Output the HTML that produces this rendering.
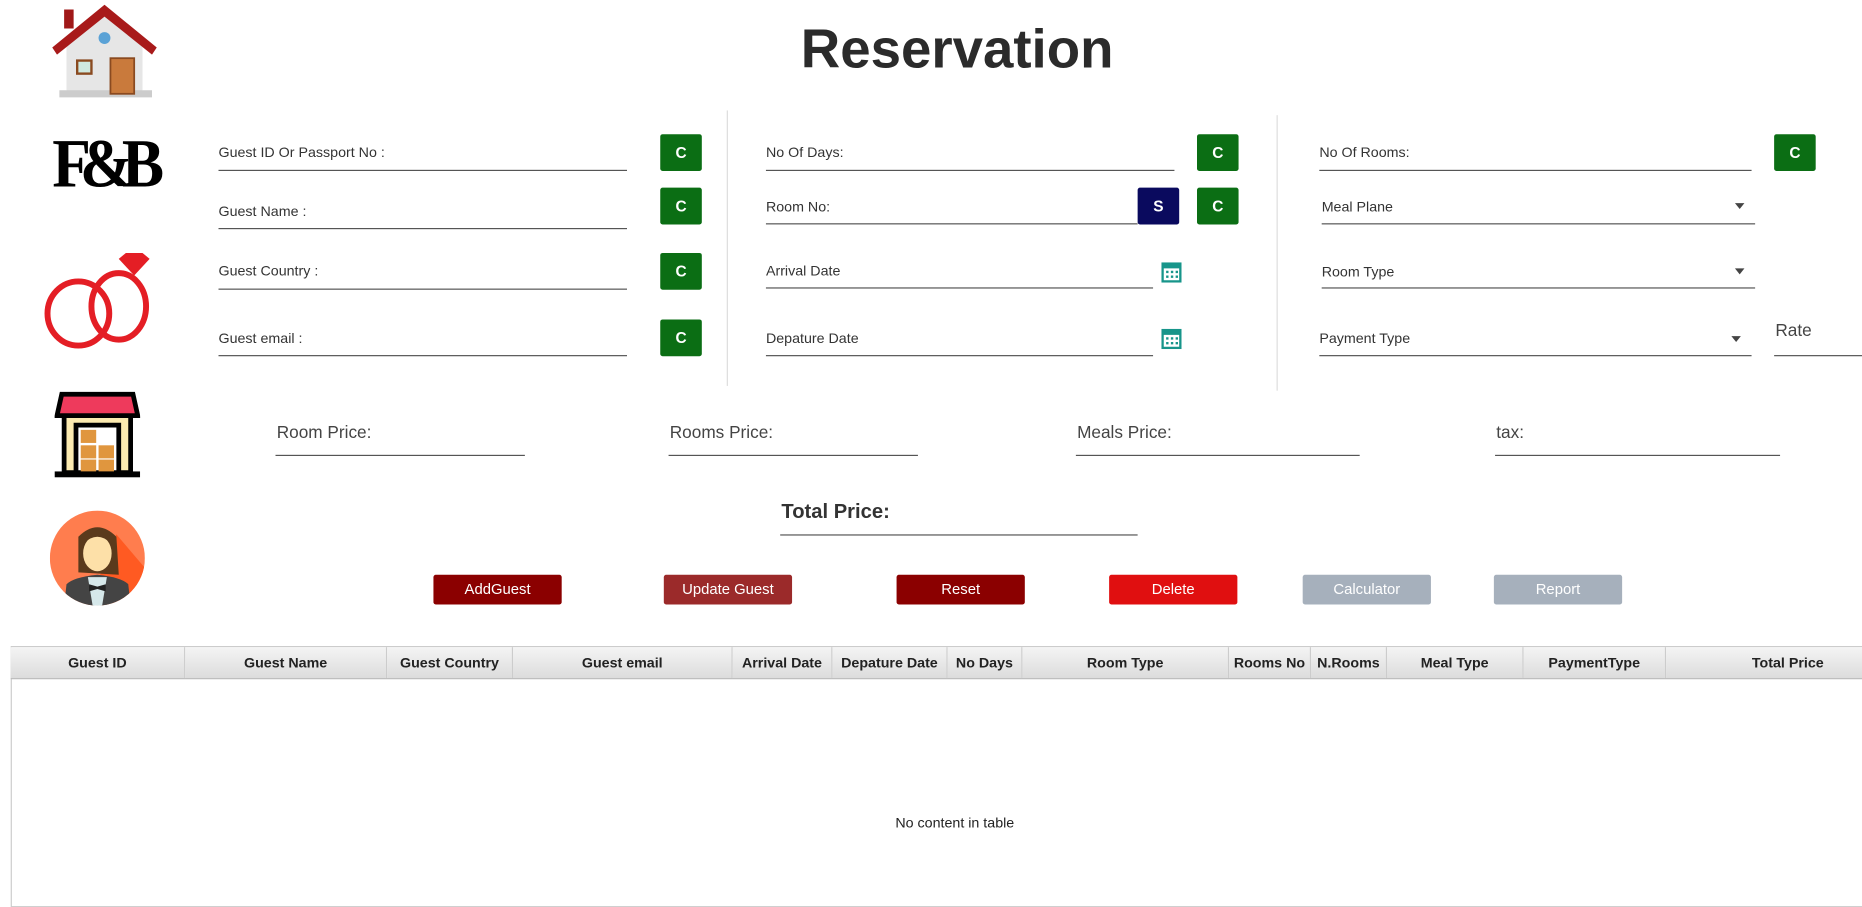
<!DOCTYPE html>
<html><head><meta charset="utf-8"><style>
html,body{margin:0;padding:0;width:1862px;height:869px;overflow:hidden;background:#fff}
#s{position:absolute;left:0;top:0;width:1568px;height:732px;transform:scale(1.1875);transform-origin:0 0;font-family:"Liberation Sans",sans-serif;color:#333}
.a{position:absolute}
.lb{position:absolute;font-size:12px;color:#333}
.ul{position:absolute;height:1px;background:#555}
.c{position:absolute;width:35px;height:31px;background:#0b6e14;color:#fff;font-weight:bold;font-size:13px;text-align:center;line-height:31px;border-radius:2px}
.btn{position:absolute;top:484px;width:108px;height:25px;color:#fff;font-size:12.5px;text-align:center;line-height:25px;border-radius:2px}
.pl{position:absolute;font-size:14.5px;color:#444}
.th{position:absolute;top:545px;height:26px;line-height:26px;font-size:12px;font-weight:bold;text-align:center;color:#222;border-right:1px solid #ccc;box-sizing:border-box;background:linear-gradient(#f4f4f4,#dcdcdc)}
.arr{position:absolute;width:0;height:0;border-left:4px solid transparent;border-right:4px solid transparent;border-top:5px solid #444}
</style></head><body><div id="s">
<div class="a" style="left:0;width:1612px;top:14px;text-align:center;font-size:46px;font-weight:bold;color:#2b2b2b">Reservation</div>

<svg class="a" style="left:42px;top:2px" width="92" height="82" viewBox="0 0 92 82">
<rect x="12" y="6" width="8" height="16" fill="#a01818"/>
<polygon points="14,34 46,10 78,34 78,76 14,76" fill="#e6e6e6"/>
<path d="M2,38 L46,2 L90,38 L86,44 L46,12 L6,44Z" fill="#a81a1a"/>
<rect x="8" y="74" width="78" height="6" fill="#ccc"/>
<circle cx="46" cy="30" r="5" fill="#5aa2d6"/>
<rect x="22" y="48" width="14" height="13" fill="#8a4a20"/><rect x="24" y="50" width="10" height="9" fill="#cfe9e0"/>
<rect x="51" y="47" width="20" height="30" fill="#c97a3c" stroke="#8a4a20" stroke-width="1.5"/>
</svg>
<div class="a" style="left:44px;top:108px;font-family:'Liberation Serif',serif;font-size:58px;line-height:60px;letter-spacing:-10px;color:#000;font-weight:bold;transform:scaleX(0.92);transform-origin:0 0">F&amp;B</div>
<svg class="a" style="left:36px;top:212px" width="96" height="84" viewBox="0 0 96 84">
<ellipse cx="30" cy="52" rx="26" ry="27" fill="none" stroke="#e41e25" stroke-width="5"/>
<ellipse cx="64" cy="46" rx="23" ry="28" fill="none" stroke="#e41e25" stroke-width="5"/>
<polygon points="64,6 70,1 84,1 90,6 77,20" fill="#e41e25"/>
</svg>
<svg class="a" style="left:46px;top:328px" width="72" height="74" viewBox="0 0 72 74">
<rect x="8" y="20" width="56" height="50" fill="#fbeab0" stroke="#000" stroke-width="4"/>
<polygon points="6,4 66,4 70,22 2,22" fill="#ee3a5c" stroke="#000" stroke-width="4"/>
<rect x="18" y="30" width="36" height="40" fill="#fff" stroke="#000" stroke-width="4"/>
<rect x="22" y="34" width="13" height="11" fill="#e0963e"/><rect x="22" y="47" width="13" height="11" fill="#e0963e"/><rect x="37" y="47" width="13" height="11" fill="#e0963e"/><rect x="22" y="59" width="13" height="10" fill="#e0963e"/><rect x="37" y="59" width="13" height="10" fill="#e0963e"/>
<rect x="0" y="69" width="72" height="5" fill="#000"/>
</svg>
<svg class="a" style="left:42px;top:430px" width="80" height="80" viewBox="0 0 80 80">
<defs><clipPath id="cc"><circle cx="40" cy="40" r="40"/></clipPath></defs>
<circle cx="40" cy="40" r="40" fill="#ff7d4e"/>
<g clip-path="url(#cc)">
<polygon points="56,20 90,60 60,90 40,60" fill="#ff5a22"/>
<path d="M24 22 Q40 6 56 22 L58 54 L24 52Z" fill="#5a3a1c"/>
<ellipse cx="40" cy="36" rx="12" ry="15" fill="#fde0a8"/>
<path d="M28 28 Q40 16 52 28 L52 22 Q40 12 28 22Z" fill="#5a3a1c"/>
<path d="M12 80 L14 62 Q20 56 40 54 Q60 56 66 62 L68 80Z" fill="#444"/>
<polygon points="32,56 48,56 44,80 36,80" fill="#d6e8ea"/>
<polygon points="33,62 40,64 47,62 47,68 40,66 33,68" fill="#222"/>
</g></svg>

<div class="lb" style="left:184px;top:121px">Guest ID Or Passport No :</div><div class="ul" style="left:184px;top:143px;width:344px"></div><div class="c" style="left:556px;top:113px">C</div>
<div class="lb" style="left:184px;top:171px">Guest Name :</div><div class="ul" style="left:184px;top:192px;width:344px"></div><div class="c" style="left:556px;top:158px">C</div>
<div class="lb" style="left:184px;top:221px">Guest Country :</div><div class="ul" style="left:184px;top:243px;width:344px"></div><div class="c" style="left:556px;top:213px">C</div>
<div class="lb" style="left:184px;top:278px">Guest email :</div><div class="ul" style="left:184px;top:299px;width:344px"></div><div class="c" style="left:556px;top:269px">C</div>

<div class="a" style="left:612px;top:93px;width:1px;height:232px;background:#ddd"></div>
<div class="lb" style="left:645px;top:121px">No Of Days:</div><div class="ul" style="left:645px;top:143px;width:344px"></div><div class="c" style="left:1008px;top:113px">C</div>
<div class="lb" style="left:645px;top:167px">Room No:</div><div class="ul" style="left:645px;top:188px;width:313px"></div><div class="c" style="left:958px;top:158px;background:#0a0a5e">S</div><div class="c" style="left:1008px;top:158px">C</div>
<div class="lb" style="left:645px;top:221px">Arrival Date</div><div class="ul" style="left:645px;top:242px;width:326px"></div>
<div class="lb" style="left:645px;top:278px">Depature Date</div><div class="ul" style="left:645px;top:299px;width:326px"></div>
<svg class="a" style="left:978px;top:220px" width="17" height="18" viewBox="0 0 17 18"><rect x="1" y="2" width="15" height="15" fill="#fff" stroke="#17958a" stroke-width="2"/><rect x="1" y="2" width="15" height="4" fill="#17958a"/><g fill="#17958a"><rect x="4" y="8" width="2" height="2"/><rect x="8" y="8" width="2" height="2"/><rect x="12" y="8" width="2" height="2"/><rect x="4" y="12" width="2" height="2"/><rect x="8" y="12" width="2" height="2"/><rect x="12" y="12" width="2" height="2"/></g></svg>
<svg class="a" style="left:978px;top:276px" width="17" height="18" viewBox="0 0 17 18"><rect x="1" y="2" width="15" height="15" fill="#fff" stroke="#17958a" stroke-width="2"/><rect x="1" y="2" width="15" height="4" fill="#17958a"/><g fill="#17958a"><rect x="4" y="8" width="2" height="2"/><rect x="8" y="8" width="2" height="2"/><rect x="12" y="8" width="2" height="2"/><rect x="4" y="12" width="2" height="2"/><rect x="8" y="12" width="2" height="2"/><rect x="12" y="12" width="2" height="2"/></g></svg>

<div class="a" style="left:1075px;top:97px;width:1px;height:232px;background:#ddd"></div>
<div class="lb" style="left:1111px;top:121px">No Of Rooms:</div><div class="ul" style="left:1111px;top:143px;width:364px"></div><div class="c" style="left:1494px;top:113px">C</div>
<div class="lb" style="left:1113px;top:167px">Meal Plane</div><div class="ul" style="left:1113px;top:188px;width:365px"></div><div class="arr" style="left:1461px;top:171px"></div>
<div class="lb" style="left:1113px;top:222px">Room Type</div><div class="ul" style="left:1113px;top:242px;width:365px"></div><div class="arr" style="left:1461px;top:226px"></div>
<div class="lb" style="left:1111px;top:278px">Payment Type</div><div class="ul" style="left:1111px;top:299px;width:364px"></div><div class="arr" style="left:1458px;top:283px"></div>
<div class="a" style="left:1495px;top:271px;font-size:14.5px;color:#444">Rate</div><div class="ul" style="left:1494px;top:299px;width:74px"></div>

<div class="pl" style="left:233px;top:357px">Room Price:</div><div class="ul" style="left:232px;top:383px;width:210px"></div>
<div class="pl" style="left:564px;top:357px">Rooms Price:</div><div class="ul" style="left:563px;top:383px;width:210px"></div>
<div class="pl" style="left:907px;top:357px">Meals Price:</div><div class="ul" style="left:906px;top:383px;width:239px"></div>
<div class="pl" style="left:1260px;top:357px">tax:</div><div class="ul" style="left:1259px;top:383px;width:240px"></div>
<div class="a" style="left:658px;top:421px;font-size:17px;font-weight:bold;color:#333">Total Price:</div><div class="ul" style="left:657px;top:450px;width:301px"></div>

<div class="btn" style="left:365px;background:#8b0000">AddGuest</div>
<div class="btn" style="left:559px;background:#9b2a2a">Update Guest</div>
<div class="btn" style="left:755px;background:#8b0000">Reset</div>
<div class="btn" style="left:934px;background:#e00f10">Delete</div>
<div class="btn" style="left:1097px;background:#a6b0bc">Calculator</div>
<div class="btn" style="left:1258px;background:#a6b0bc">Report</div>

<div class="a" style="left:9px;top:544px;width:1570px;height:220px;border:1px solid #ccc;box-sizing:border-box"></div>
<div class="th" style="left:9px;width:147px">Guest ID</div>
<div class="th" style="left:156px;width:170px">Guest Name</div>
<div class="th" style="left:326px;width:106px">Guest Country</div>
<div class="th" style="left:432px;width:185px">Guest email</div>
<div class="th" style="left:617px;width:84px">Arrival Date</div>
<div class="th" style="left:701px;width:97px">Depature Date</div>
<div class="th" style="left:798px;width:63px">No Days</div>
<div class="th" style="left:861px;width:174px">Room Type</div>
<div class="th" style="left:1035px;width:69px">Rooms No</div>
<div class="th" style="left:1104px;width:64px">N.Rooms</div>
<div class="th" style="left:1168px;width:115px">Meal Type</div>
<div class="th" style="left:1283px;width:120px">PaymentType</div>
<div class="th" style="left:1403px;width:206px">Total Price</div>
<div class="a" style="left:9px;top:571px;width:1570px;height:1px;background:#bbb"></div>
<div class="a" style="left:754px;top:686px;font-size:12px;color:#222">No content in table</div>
</div></body></html>
